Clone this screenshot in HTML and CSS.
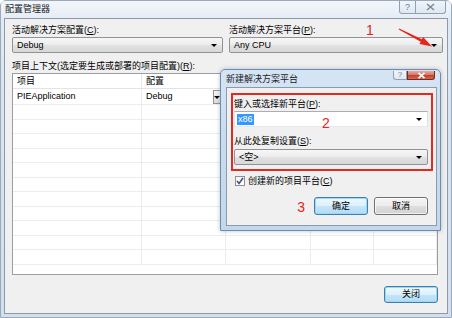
FILE: index.html
```html
<!DOCTYPE html>
<html>
<head>
<meta charset="utf-8">
<link rel="stylesheet" href="styles.css">
</head>
<body>
<div class="window">
  <div class="titlebar">
    <span class="title">配置管理器</span>
    <div class="caption inactive">
      <span class="cbtn help">?</span>
      <span class="cbtn close">
        <svg width="9" height="8" viewBox="0 0 9 8"><path d="M1 1 L8 7 M8 1 L1 7" stroke="#7d8a99" stroke-width="1.6" fill="none"/></svg>
      </span>
    </div>
  </div>
  <div class="panel">
    <div class="top-row">
      <div class="field left">
        <div class="label">活动解决方案配置(<u>C</u>):</div>
        <div class="combo">Debug<span class="arrow"></span></div>
      </div>
      <div class="field right">
        <div class="label">活动解决方案平台(<u>P</u>):</div>
        <div class="combo">Any CPU<span class="arrow"></span></div>
      </div>
    </div>
    <div class="label ctx">项目上下文(选定要生成或部署的项目配置)(<u>R</u>):</div>
    <div class="grid">
      <div class="cell head">项目</div><div class="cell head">配置</div><div class="cell head"></div><div class="cell head"></div><div class="cell head"></div>
      <div class="cell first">PIEApplication</div><div class="cell first cfg">Debug<span class="mini-drop"><span class="arrow"></span></span></div><div class="cell first"></div><div class="cell first"></div><div class="cell first"></div>
      <div class="cell"></div><div class="cell"></div><div class="cell"></div><div class="cell"></div><div class="cell"></div>
      <div class="cell"></div><div class="cell"></div><div class="cell"></div><div class="cell"></div><div class="cell"></div>
      <div class="cell"></div><div class="cell"></div><div class="cell"></div><div class="cell"></div><div class="cell"></div>
      <div class="cell"></div><div class="cell"></div><div class="cell"></div><div class="cell"></div><div class="cell"></div>
      <div class="cell"></div><div class="cell"></div><div class="cell"></div><div class="cell"></div><div class="cell"></div>
      <div class="cell"></div><div class="cell"></div><div class="cell"></div><div class="cell"></div><div class="cell"></div>
      <div class="cell"></div><div class="cell"></div><div class="cell"></div><div class="cell"></div><div class="cell"></div>
      <div class="cell"></div><div class="cell"></div><div class="cell"></div><div class="cell"></div><div class="cell"></div>
      <div class="cell"></div><div class="cell"></div><div class="cell"></div><div class="cell"></div><div class="cell"></div>
      <div class="cell"></div><div class="cell"></div><div class="cell"></div><div class="cell"></div><div class="cell"></div>
      <div class="cell"></div><div class="cell"></div><div class="cell"></div><div class="cell"></div><div class="cell"></div>
    </div>
    <div class="footer">
      <span class="btn default close-btn">关闭</span>
    </div>
  </div>

  <span class="annot n1">1</span>
  <svg class="arrow-svg" width="452" height="318" viewBox="0 0 452 318">
    <polygon points="398.2,27.4 420.9,38.3 422.1,35.9 431,45.5 418.5,43.1 419.7,40.7 397.8,28.6" fill="#e8231b"/>
  </svg>

  <div class="dialog">
    <div class="dtitlebar">
      <span class="title">新建解决方案平台</span>
      <div class="caption active">
        <span class="cbtn help">?</span>
        <span class="cbtn close red">
          <svg width="9" height="7" viewBox="0 0 9 7"><path d="M1.5 0.8 L7.5 6.2 M7.5 0.8 L1.5 6.2" stroke="#ffffff" stroke-width="1.8" fill="none"/></svg>
        </span>
      </div>
    </div>
    <div class="dpanel">
      <div class="redbox">
        <div class="label">键入或选择新平台(<u>P</u>):</div>
        <div class="combo edit"><span class="sel">x86</span><span class="arrow"></span></div>
        <div class="label second">从此处复制设置(<u>S</u>):</div>
        <div class="combo">&lt;空&gt;<span class="arrow"></span></div>
        <span class="annot n2">2</span>
      </div>
      <div class="check-row">
        <span class="checkbox">
          <svg width="8" height="8" viewBox="0 0 8 8"><path d="M1 4 L3 6.5 L7 1" stroke="#3a4f8a" stroke-width="1.5" fill="none"/></svg>
        </span>
        <span class="label">创建新的项目平台(<u>C</u>)</span>
      </div>
      <div class="btn-row">
        <span class="annot n3">3</span>
        <span class="btn default">确定</span>
        <span class="btn">取消</span>
      </div>
    </div>
  </div>
</div>
</body>
</html>
```

FILE: styles.css
```css
* { box-sizing: border-box; }
html, body { margin: 0; padding: 0; }
body {
  width: 452px;
  height: 318px;
  overflow: hidden;
  font-family: "Liberation Sans", "Noto Sans CJK SC", sans-serif;
  font-size: 9px;
  color: #000;
}
u { text-decoration: underline; }

.window {
  position: relative;
  width: 452px;
  height: 318px;
  background: linear-gradient(180deg, #e4ecf5 0%, #d9e4f0 30%, #d3dfec 100%);
  border: 1px solid #9aaabd;
  border-radius: 6px 6px 0 0;
  display: flex;
  flex-direction: column;
}

.titlebar {
  height: 17px;
  display: flex;
  align-items: flex-start;
  justify-content: space-between;
  padding-left: 4px;
  background: linear-gradient(180deg, rgba(255,255,255,0.55), rgba(255,255,255,0.1));
}
.titlebar .title { margin-top: 3px; line-height: 11px; color: #1b1b1b; }

.caption { display: flex; }
.cbtn {
  height: 13px;
  display: flex;
  align-items: center;
  justify-content: center;
  font-size: 9px;
  line-height: 1;
  color: #6d7b8c;
  border: 1px solid #8fa1b7;
  border-top: none;
  background: linear-gradient(180deg, #f1f5fa, #dfe7f1);
}
.caption.inactive { margin-right: 5px; }
.caption.inactive .help { width: 17px; border-radius: 0 0 0 3px; }
.caption.inactive .close { width: 30px; border-left: none; border-radius: 0 0 3px 0; }

.panel {
  flex: 1;
  margin: 0 3px 3px 3px;
  border: 1px solid #8c9aab;
  background: #f0f0f0;
  padding: 5px 4px 0 7px;
  display: flex;
  flex-direction: column;
}

.label { line-height: 12px; height: 12px; white-space: nowrap; }

.top-row { display: flex; gap: 6px; }
.field.left { width: 211px; }
.field.right { flex: 1; }
.field .combo { margin-top: 1px; }

.combo {
  position: relative;
  height: 16px;
  border: 1px solid #8f9397;
  border-radius: 2px;
  background: linear-gradient(180deg, #f6f6f6 0%, #ececec 50%, #e1e1e1 51%, #d8d8d8 100%);
  padding-left: 4px;
  line-height: 14px;
  display: flex;
  align-items: center;
}
.combo .arrow, .mini-drop .arrow {
  position: absolute;
  right: 5px;
  top: 6px;
  width: 0;
  height: 0;
  border-left: 3px solid transparent;
  border-right: 3px solid transparent;
  border-top: 3px solid #000;
}

.ctx { margin-top: 7px; }

.grid {
  margin-top: 1px;
  width: 426px;
  height: 202px;
  border: 1px solid #9a9ea3;
  background: #fff;
  display: grid;
  grid-template-columns: 129px 84px 85px 63px 1fr;
  grid-template-rows: 15px 16px repeat(12, 14.5px);
  overflow: hidden;
}
.cell {
  border-right: 1px solid #ececec;
  border-bottom: 1px solid #ececec;
  padding-left: 4px;
  line-height: 14px;
  white-space: nowrap;
  position: relative;
}
.cell.head { line-height: 14px; border-bottom: 1px solid #e3e3e3; border-right: 1px solid #e6e6e6; }
.cell.first { line-height: 15px; }
.cfg .mini-drop {
  position: absolute;
  right: 3px;
  top: 1px;
  width: 9px;
  height: 14px;
  border: 1px solid #8f9397;
  background: linear-gradient(180deg, #f6f6f6, #dcdcdc);
}
.cfg .mini-drop .arrow { right: 1px; top: 5px; }

.footer {
  margin-top: 11px;
  width: 426px;
  display: flex;
  justify-content: flex-end;
}

.btn {
  width: 54px;
  height: 18px;
  border: 1px solid #707070;
  border-radius: 3px;
  background: linear-gradient(180deg, #f4f4f4 0%, #ececec 50%, #dedede 51%, #d2d2d2 100%);
  display: flex;
  align-items: center;
  justify-content: center;
  line-height: 1;
  box-shadow: inset 0 0 0 1px rgba(255,255,255,0.7);
}
.btn.default {
  border-color: #3c7fb1;
  background: linear-gradient(180deg, #eef8fe 0%, #dcf0fc 50%, #c4e5f9 51%, #b2dcf6 100%);
  box-shadow: inset 0 0 0 1px #9fd6f5;
}
.close-btn { height: 17px; }

.annot {
  position: absolute;
  color: #e8231b;
  font-family: "Liberation Sans", sans-serif;
  font-size: 14px;
  line-height: 14px;
}
.n1 { left: 365px; top: 22px; }
.arrow-svg { position: absolute; left: 0; top: 0; pointer-events: none; }

.dialog {
  position: absolute;
  left: 219px;
  top: 68px;
  width: 221px;
  height: 162px;
  border: 1px solid #6e8bb0;
  border-radius: 5px 5px 0 0;
  background: linear-gradient(180deg, #d6e5f4 0%, #c9dcef 40%, #c4d8ec 100%);
  box-shadow: 0 0 4px rgba(60, 80, 110, 0.35);
  display: flex;
  flex-direction: column;
}
.dtitlebar {
  height: 17px;
  display: flex;
  justify-content: space-between;
  padding-left: 5px;
}
.dtitlebar .title { margin-top: 4px; line-height: 11px; color: #1b1b1b; }
.caption.active { margin-right: 5px; margin-top: 1px; }
.caption.active .cbtn { height: 9px; }
.caption.active .help { width: 14px; border-radius: 0 0 0 3px; font-size: 8px; }
.caption.active .close.red {
  width: 28px;
  border: 1px solid #7a2a20;
  border-top: none;
  border-radius: 0 0 3px 0;
  background: linear-gradient(180deg, #e9a89a 0%, #d77b6a 45%, #c4432e 55%, #cf6a52 100%);
}

.dpanel {
  flex: 1;
  margin: 0 3px 4px 5px;
  border: 1px solid #8c9aab;
  background: #f0f0f0;
  padding: 5px 3px 0 4px;
  display: flex;
  flex-direction: column;
}
.redbox {
  position: relative;
  border: 2px solid #e02a22;
  padding: 3px 3px 4px 1px;
}
.redbox .combo { margin-top: 1px; height: 16px; }
.redbox .combo + .label.second { margin-top: 8px; }
.redbox .label.second + .combo { margin-top: 2px; }
.combo.edit {
  background: #fff;
  border-color: #abadb3 #dbdfe6 #e3e9ef #e2e3ea;
  border-radius: 0;
  padding-left: 2px;
}
.combo.edit .sel { background: #3399ff; color: #fff; padding: 0 1px; line-height: 11px; }
.n2 { left: 89px; top: 21px; }

.check-row {
  margin-top: 4px;
  height: 12px;
  display: flex;
  align-items: center;
  gap: 3px;
  padding-left: 4px;
}
.checkbox {
  width: 10px;
  height: 10px;
  border: 1px solid #8e8f8f;
  background: linear-gradient(180deg, #f4f4f4, #ffffff);
  display: flex;
  align-items: center;
  justify-content: center;
}

.btn-row {
  margin-top: 10px;
  display: flex;
  justify-content: flex-end;
  align-items: center;
  gap: 6px;
  padding-right: 5px;
  position: relative;
}
.btn-row .annot { position: static; margin-right: 3px; margin-top: 2px; }
```
